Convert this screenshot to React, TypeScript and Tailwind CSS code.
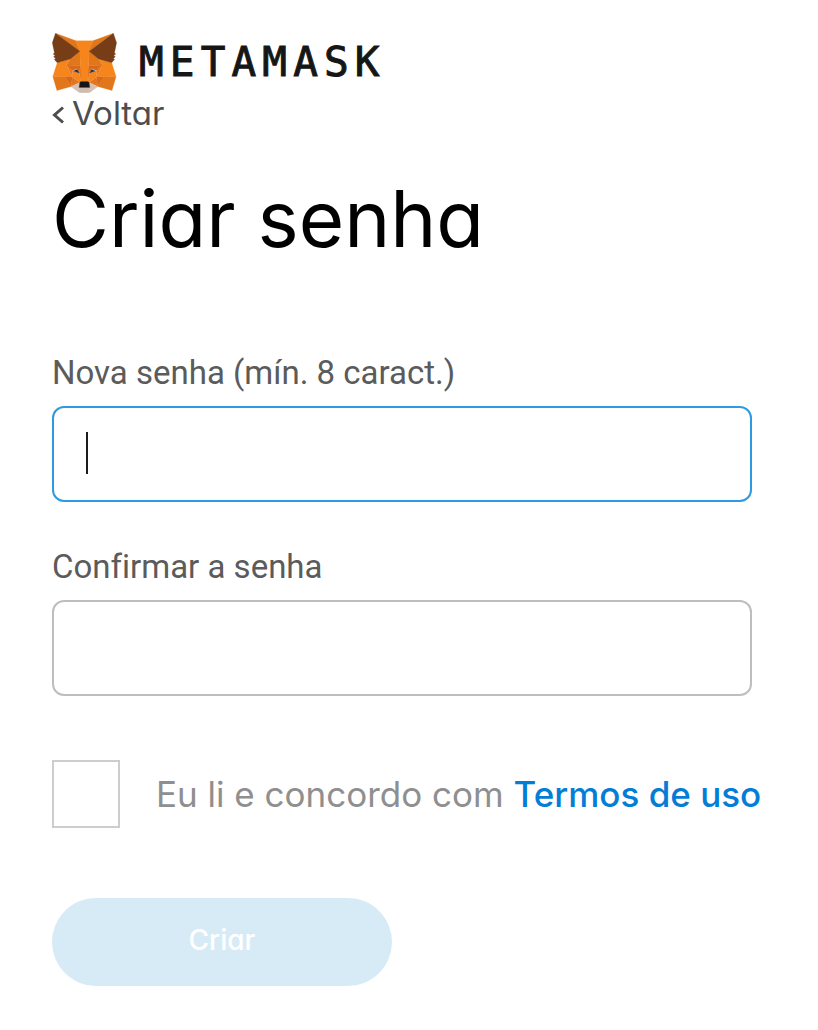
import React, { useState } from "react";

function FoxLogo() {
  return (
    <svg viewBox="31 35 257 238" className="h-[60px] w-[65px] shrink-0" aria-hidden="true">
      <g strokeWidth="1" strokeLinejoin="round">
        <g fill="#e2761b" stroke="#e2761b">
          <polygon points="274.1,35.5 174.6,109.4 193,65.8" />
          <polygon points="44.4,35.5 143.1,110.1 125.6,65.8" />
          <polygon points="238.3,206.8 211.8,247.4 268.5,263 284.8,207.7" />
          <polygon points="33.9,207.7 50.1,263 106.8,247.4 80.3,206.8" />
          <polygon points="103.6,138.2 87.8,162.1 144.1,164.6 142.1,104.1" />
          <polygon points="214.9,138.2 175.9,103.4 174.6,164.6 230.8,162.1" />
          <polygon points="106.8,247.4 140.6,230.9 111.4,208.1" />
          <polygon points="177.9,230.9 211.8,247.4 207.1,208.1" />
        </g>
        <g fill="#d7c1b3" stroke="#d7c1b3">
          <polygon points="211.8,247.4 177.9,230.9 180.6,253 180.3,262.3" />
          <polygon points="106.8,247.4 138.3,262.3 138.1,253 140.6,230.9" />
        </g>
        <g fill="#d9691a" stroke="#d9691a">
          <polygon points="106.8,247.4 111.6,206.8 80.3,207.7" />
          <polygon points="207,206.8 211.8,247.4 238.3,207.7" />
          <polygon points="230.8,162.1 174.6,164.6 179.8,193.5 188.1,176.1 208.1,185.2" />
          <polygon points="110.6,185.2 130.6,176.1 138.8,193.5 144.1,164.6 87.8,162.1" />
        </g>
        <g fill="#e4751f" stroke="#e4751f">
          <polygon points="87.8,162.1 111.4,208.1 110.6,185.2" />
          <polygon points="208.1,185.2 207.1,208.1 230.8,162.1" />
          <polygon points="144.1,164.6 138.8,193.5 145.4,227.6 146.9,182.7" />
          <polygon points="174.6,164.6 171.9,182.6 173.1,227.6 179.8,193.5" />
        </g>
        <g fill="#f6851b" stroke="#f6851b">
          <polygon points="179.8,193.5 173.1,227.6 177.9,230.9 207.1,208.1 208.1,185.2" />
          <polygon points="110.6,185.2 111.4,208.1 140.6,230.9 145.4,227.6 138.8,193.5" />
          <polygon points="267.2,153.5 214.9,138.2 230.8,162.1 207.1,208.1 238.3,207.7 284.8,207.7" />
          <polygon points="103.6,138.2 51.3,153.5 33.9,207.7 80.3,207.7 111.4,208.1 87.8,162.1" />
          <polygon points="174.6,164.6 177.9,106.9 193.1,65.8 125.6,65.8 140.6,106.9 144.1,164.6 145.3,182.8 145.4,227.6 173.1,227.6 173.3,182.8" />
        </g>
        <g fill="#233447" stroke="#233447">
          <polygon points="138.8,193.5 115,186 130.5,179" />
          <polygon points="179.7,193.5 188,179 203,186" />
        </g>
        <polygon
          fill="#d0bcae"
          stroke="#d0bcae"
          points="180.3,262.3 180.6,253 178.1,250.8 140.4,250.8 138.1,253 138.3,262.3 106.8,247.4 117.8,256.4 140.1,271.9 178.4,271.9 200.8,256.4 211.8,247.4"
        />
        <polygon
          fill="#161616"
          stroke="#161616"
          points="177.9,230.9 173.1,227.6 145.4,227.6 140.6,230.9 138.1,251 140.4,250.8 178.1,250.8 180.6,251"
        />
        <g fill="#763d16" stroke="#763d16">
          <polygon points="278.3,114.2 286.8,73.4 274.1,35.5 177.9,106.9 214.9,138.2 267.2,153.5 278.8,140 273.8,136.4 281.8,129.1 275.6,124.3 283.6,118.2" />
          <polygon points="31.8,73.4 40.3,114.2 34.9,118.2 42.9,124.3 36.8,129.1 44.8,136.4 39.8,140 51.3,153.5 103.6,138.2 140.6,106.9 44.4,35.5" />
        </g>
      </g>
    </svg>
  );
}

export default function App() {
  const [password, setPassword] = useState("");
  const [confirmation, setConfirmation] = useState("");
  const [accepted, setAccepted] = useState(false);

  return (
    <main className="min-h-screen bg-white pt-8 pr-[66px] pb-11 pl-[52px] font-['Inter',sans-serif] [font-feature-settings:'cv11']">
      <header className="flex items-center gap-[22px]">
        <FoxLogo />
        <span className="font-['DejaVu_Sans_Mono',monospace] text-[41px] leading-[61px] tracking-[0.15em] text-[#161616] [-webkit-text-stroke:1px_#161616]">
          METAMASK
        </span>
      </header>

      <a href="#voltar" className="flex w-fit items-center gap-2 text-[33px] leading-10 text-[#4d4d4d]">
        <svg viewBox="0 0 12 18" className="mt-1 h-[18px] w-3" fill="none" stroke="currentColor" strokeWidth="3" aria-hidden="true">
          <path d="M11 1.5 2.5 9 11 16.5" />
        </svg>
        Voltar
      </a>

      <h1 className="mt-9 text-[78px] leading-[100px] text-black">Criar senha</h1>

      <form className="mt-[84px] flex flex-col items-start" onSubmit={(e) => e.preventDefault()}>
        <label
          htmlFor="new-password"
          className="font-['Roboto',sans-serif] text-[33px] leading-10 text-[#5b5b5b] [font-variant-ligatures:none]"
        >
          Nova senha (mín. 8 caract.)
        </label>
        <div className="relative mt-[13px] w-full">
          <input
            id="new-password"
            type="password"
            value={password}
            onChange={(e) => setPassword(e.target.value)}
            className="h-24 w-full rounded-xl border-2 border-[#2f9ae0] bg-white px-8 text-[32px] caret-transparent outline-none"
          />
          {password === "" && <span className="pointer-events-none absolute top-[26px] left-[34px] h-[42px] w-0.5 bg-[#1c1c1c]" />}
        </div>

        <label
          htmlFor="confirm-password"
          className="mt-[45px] font-['Roboto',sans-serif] text-[33px] leading-10 text-[#5b5b5b] [font-variant-ligatures:none]"
        >
          Confirmar a senha
        </label>
        <input
          id="confirm-password"
          type="password"
          value={confirmation}
          onChange={(e) => setConfirmation(e.target.value)}
          className="mt-[13px] h-24 w-full rounded-xl border-2 border-[#bebebe] bg-white px-8 text-[32px] outline-none"
        />

        <div className="mt-16 flex items-center gap-9">
          <input
            id="terms"
            type="checkbox"
            checked={accepted}
            onChange={(e) => setAccepted(e.target.checked)}
            className="size-[68px] shrink-0 appearance-none border-2 border-[#cdcdcd] bg-white checked:bg-[#037dd6]"
          />
          <span className="text-[35px] leading-10 whitespace-nowrap text-[#8f8f8f]">
            <label htmlFor="terms">Eu li e concordo com</label>{" "}
            <a href="#termos" className="font-medium text-[#037dd6]">
              Termos de uso
            </a>
          </span>
        </div>

        <button type="submit" className="mt-[70px] h-[88px] w-[340px] rounded-full bg-[#d7ebf7] pb-1 text-[28px] font-medium text-white">
          Criar
        </button>
      </form>
    </main>
  );
}
